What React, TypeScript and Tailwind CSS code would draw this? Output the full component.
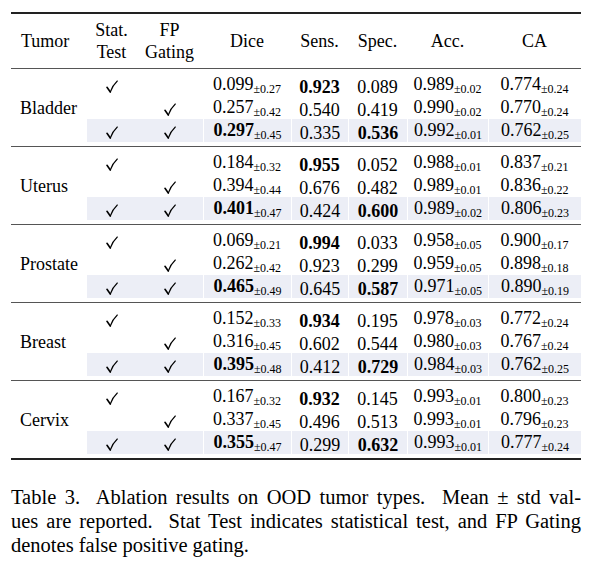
import React from "react";

type Row = [string, string, string, string, string, string, string, string];

const groups: { name: string; rows: Row[] }[] = [
  {
    name: "Bladder",
    rows: [
      ["0.099", "0.27", "0.923", "0.089", "0.989", "0.02", "0.774", "0.24"],
      ["0.257", "0.42", "0.540", "0.419", "0.990", "0.02", "0.770", "0.24"],
      ["0.297", "0.45", "0.335", "0.536", "0.992", "0.01", "0.762", "0.25"],
    ],
  },
  {
    name: "Uterus",
    rows: [
      ["0.184", "0.32", "0.955", "0.052", "0.988", "0.01", "0.837", "0.21"],
      ["0.394", "0.44", "0.676", "0.482", "0.989", "0.01", "0.836", "0.22"],
      ["0.401", "0.47", "0.424", "0.600", "0.989", "0.02", "0.806", "0.23"],
    ],
  },
  {
    name: "Prostate",
    rows: [
      ["0.069", "0.21", "0.994", "0.033", "0.958", "0.05", "0.900", "0.17"],
      ["0.262", "0.42", "0.923", "0.299", "0.959", "0.05", "0.898", "0.18"],
      ["0.465", "0.49", "0.645", "0.587", "0.971", "0.05", "0.890", "0.19"],
    ],
  },
  {
    name: "Breast",
    rows: [
      ["0.152", "0.33", "0.934", "0.195", "0.978", "0.03", "0.772", "0.24"],
      ["0.316", "0.45", "0.602", "0.544", "0.980", "0.03", "0.767", "0.24"],
      ["0.395", "0.48", "0.412", "0.729", "0.984", "0.03", "0.762", "0.25"],
    ],
  },
  {
    name: "Cervix",
    rows: [
      ["0.167", "0.32", "0.932", "0.145", "0.993", "0.01", "0.800", "0.23"],
      ["0.337", "0.45", "0.496", "0.513", "0.993", "0.01", "0.796", "0.23"],
      ["0.355", "0.47", "0.299", "0.632", "0.993", "0.01", "0.777", "0.24"],
    ],
  },
];

function Check() {
  return (
    <svg width="12" height="13" viewBox="0 0 12 13" className="inline-block">
      <path d="M1 7.3 L4.3 12" stroke="#000" strokeWidth="1.6" fill="none" strokeLinecap="round" />
      <path d="M4.3 12 Q6.5 5.5 11.3 1" stroke="#000" strokeWidth="1.1" fill="none" strokeLinecap="round" />
    </svg>
  );
}

function Val({ v, pm, bold }: { v: string; pm?: string; bold?: boolean }) {
  return (
    <span className="whitespace-nowrap">
      <span className={bold ? "font-bold" : ""}>{v}</span>
      {pm && <span className="text-[12px] align-[-3px]">±{pm}</span>}
    </span>
  );
}

export default function App() {
  const cols = "grid grid-cols-[49px_67px_88px_57px_59px_81px_93px]";
  return (
    <div className="w-[606px] h-[561px] bg-white pl-[11px] pt-[12px] font-['Liberation_Serif',serif] text-[18px] text-black leading-[22px]">
      <div className="w-[570px]">
        <div className="border-t-2 border-[#222]" />
        <div className="flex h-[55px] items-center border-b border-[#555]">
          <div className="w-[76px] pl-[10px]">Tumor</div>
          <div className={cols + " flex-1 items-center text-center"}>
            <div>Stat.<br />Test</div>
            <div>FP<br />Gating</div>
            <div>Dice</div>
            <div>Sens.</div>
            <div>Spec.</div>
            <div>Acc.</div>
            <div>CA</div>
          </div>
        </div>

        {groups.map((g, gi) => (
          <div
            key={g.name}
            className={
              "flex py-[4px] " +
              (gi < groups.length - 1 ? "border-b border-[#555]" : "border-b-2 border-[#222]")
            }
          >
            <div className="w-[76px] pl-[9px] flex items-center">{g.name}</div>
            <div className="flex-1 flex flex-col">
              {g.rows.map((r, ri) => {
                const hl = ri === 2;
                const sep = hl ? "border-l border-white" : "";
                return (
                  <div
                    key={ri}
                    className={cols + " h-[23px] items-center text-center " + (hl ? "bg-[#eceef6]" : "")}
                  >
                    <div className="h-full flex items-center justify-center">{ri !== 1 && <Check />}</div>
                    <div className="h-full flex items-center justify-center">{ri !== 0 && <Check />}</div>
                    <div className={"h-full flex items-center justify-center " + sep}>
                      <Val v={r[0]} pm={r[1]} bold={ri === 2} />
                    </div>
                    <div className={"h-full flex items-center justify-center " + sep}>
                      <Val v={r[2]} bold={ri === 0} />
                    </div>
                    <div className={"h-full flex items-center justify-center " + sep}>
                      <Val v={r[3]} bold={ri === 2} />
                    </div>
                    <div className={"h-full flex items-center justify-center " + sep}>
                      <Val v={r[4]} pm={r[5]} />
                    </div>
                    <div className={"h-full flex items-center justify-center " + sep}>
                      <Val v={r[6]} pm={r[7]} />
                    </div>
                  </div>
                );
              })}
            </div>
          </div>
        ))}

        <div className="mt-[25px] text-[20.5px] leading-[24px]">
          <div className="whitespace-nowrap text-justify [text-align-last:justify]">
            Table 3.&nbsp; Ablation results on OOD tumor types.&nbsp; Mean ± std val-
          </div>
          <div className="whitespace-nowrap text-justify [text-align-last:justify]">
            ues are reported.&nbsp; Stat Test indicates statistical test, and FP Gating
          </div>
          <div>denotes false positive gating.</div>
        </div>
      </div>
    </div>
  );
}
